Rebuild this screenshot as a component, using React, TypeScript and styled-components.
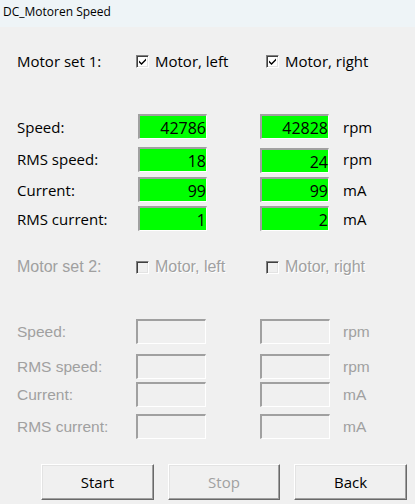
import styled, { createGlobalStyle } from 'styled-components';

const Global = createGlobalStyle`
    html, body {
        margin: 0;
        padding: 0;
        background: #f0f0f0;
    }
    body {
        font-family: "Open Sans", "Noto Sans", sans-serif;
        color: #000;
    }
`;

const Window = styled.div`
    width: 415px;
    height: 504px;
    display: flex;
    flex-direction: column;
    background: #f0f0f0;
    overflow: hidden;
`;

const TitleBar = styled.div`
    height: 27px;
    flex: none;
    background: #eef4f7;
    display: flex;
    align-items: center;
    padding-left: 3px;
    font-size: 12px;
    padding-bottom: 4px;
    box-sizing: border-box;
`;

const Group = styled.div<{ $disabled?: boolean }>`
    display: flex;
    flex-direction: column;
    padding-left: 17px;
    color: ${p => (p.$disabled ? '#a0a0a0' : '#000')};
    font-family: ${p => (p.$disabled ? '"Liberation Sans", sans-serif' : '"Open Sans", sans-serif')};
    font-size: ${p => (p.$disabled ? '15.5px' : '15px')};
`;

const Row = styled.div<{ $mt: number; $h?: number }>`
    display: grid;
    grid-template-columns: 121px 122px 83px 1fr;
    align-items: center;
    margin-top: ${p => p.$mt}px;
    height: ${p => p.$h ?? 25}px;
`;

const Label = styled.div``;

const Heading = styled.div<{ $disabled?: boolean }>`
    font-size: ${p => (p.$disabled ? '16px' : '15px')};
`;

const Check = styled.label<{ $disabled?: boolean; $ml?: number }>`
    display: flex;
    align-items: center;
    column-gap: 6px;
    font-size: ${p => (p.$disabled ? '16px' : '15px')};
    text-shadow: ${p => (p.$disabled ? '1px 1px 0 #fff' : 'none')};
    margin-left: ${p => p.$ml ?? 0}px;
`;

const Box = styled.span<{ $disabled?: boolean }>`
    width: 13px;
    height: 13px;
    flex: none;
    box-sizing: border-box;
    display: inline-flex;
    align-items: center;
    justify-content: center;
    background: ${p => (p.$disabled ? '#f0f0f0' : '#fff')};
    border-top: 1px solid #808080;
    border-left: 1px solid #808080;
    border-right: 1px solid #fff;
    border-bottom: 1px solid #fff;
    box-shadow: inset 1px 1px 0 #404040, inset -1px -1px 0 #e3e3e3;
`;

const Tick = () => (
    <svg width="9" height="9" viewBox="0 0 9 9">
        <path d="M1 3.5 L3.5 6 L8 1.5 L8 3.5 L3.5 8 L1 5.5 Z" fill="#000" />
    </svg>
);

const Field = styled.div<{ $disabled?: boolean; $dy?: number; $dx?: number }>`
    width: ${p => (p.$disabled ? 70 : 69)}px;
    height: 25px;
    box-sizing: border-box;
    background: ${p => (p.$disabled ? '#f0f0f0' : '#00ff00')};
    border-top: 2px solid #a0a0a0;
    border-left: 2px solid #a0a0a0;
    border-right: 1px solid #fff;
    border-bottom: 1px solid #fff;
    display: flex;
    align-items: center;
    justify-content: flex-end;
    padding: 2px 0 0 0;
    font-family: "Open Sans", sans-serif;
    font-size: 16px;
    color: #000;
    margin-top: ${p => p.$dy ?? 0}px;
    margin-left: ${p => p.$dx ?? 0}px;
`;

const Unit = styled.div``;

const Buttons = styled.div`
    display: flex;
    column-gap: 14px;
    padding-left: 41px;
    margin-top: 25px;
`;

const Button = styled.button<{ $w: number }>`
    width: ${p => p.$w}px;
    height: 36px;
    box-sizing: border-box;
    background: #f0f0f0;
    border-top: 1px solid #fff;
    border-left: 1px solid #fff;
    border-right: 1px solid #696969;
    border-bottom: 1px solid #696969;
    box-shadow: inset -1px -1px 0 #a0a0a0, inset 1px 1px 0 #e3e3e3;
    font-family: "Open Sans", sans-serif;
    font-size: 15px;
    color: #000;
    padding: 0;
    &:disabled {
        color: #a0a0a0;
    }
`;

type Value = { label: string; left?: string; right?: string; unit: string; mt: number; dy?: number };

const set1: Value[] = [
    { label: 'Speed:', left: '42786', right: '42828', unit: 'rpm', mt: 41 },
    { label: 'RMS speed:', left: '18', right: '24', unit: 'rpm', mt: 6, dy: 3 },
    { label: 'Current:', left: '99', right: '99', unit: 'mA', mt: 7 },
    { label: 'RMS current:', left: '1', right: '2', unit: 'mA', mt: 4 },
];

const set2: Value[] = [
    { label: 'Speed:', unit: 'rpm', mt: 40 },
    { label: 'RMS speed:', unit: 'rpm', mt: 10 },
    { label: 'Current:', unit: 'mA', mt: 3 },
    { label: 'RMS current:', unit: 'mA', mt: 7 },
];

const MotorSet = ({ n, values, disabled, mt }: { n: number; values: Value[]; disabled?: boolean; mt: number }) => (
    <Group $disabled={disabled}>
        <Row $mt={mt} $h={24}>
            <Heading $disabled={disabled}>Motor set {n}:</Heading>
            <Check $disabled={disabled} $ml={-2}>
                <Box $disabled={disabled}>{!disabled && <Tick />}</Box>
                Motor, left
            </Check>
            <Check $disabled={disabled} $ml={6} style={{ gridColumn: '3 / 5' }}>
                <Box $disabled={disabled}>{!disabled && <Tick />}</Box>
                Motor, right
            </Check>
        </Row>
        {values.map(v => (
            <Row key={v.label} $mt={v.mt}>
                <Label>{v.label}</Label>
                <Field $disabled={disabled} $dx={disabled ? -2 : 0}>{v.left}</Field>
                <Field $disabled={disabled} $dy={v.dy}>{v.right}</Field>
                <Unit>{v.unit}</Unit>
            </Row>
        ))}
    </Group>
);

const App = () => (
    <Window>
        <Global />
        <TitleBar>DC_Motoren Speed</TitleBar>
        <MotorSet n={1} values={set1} mt={22} />
        <MotorSet n={2} values={set2} disabled mt={24} />
        <Buttons>
            <Button $w={113}>Start</Button>
            <Button $w={112} disabled>Stop</Button>
            <Button $w={113}>Back</Button>
        </Buttons>
    </Window>
);

export default App;
